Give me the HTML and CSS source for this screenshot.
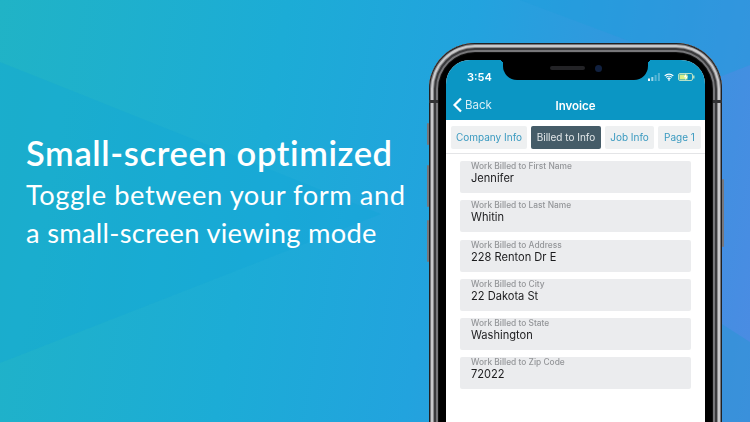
FILE: index.html
```html
<!DOCTYPE html>
<html lang="en">
<head>
<meta charset="utf-8">
<title>Small-screen optimized</title>
<link rel="stylesheet" href="styles.css">
</head>
<body>
<main class="stage">
  <svg class="facets" viewBox="0 0 750 422" aria-hidden="true">
    <polygon class="facet-wedge" points="0,62 381,214 0,363"/>
    <polygon class="facet-top" points="520,0 750,0 750,65 722,76"/>
    <polygon class="facet-bottom" points="700,310 750,342 750,422 640,422"/>
  </svg>
  <section class="copy">
    <h1>Small-screen optimized</h1>
    <p>Toggle between your form and<br><span class="tight">a small-screen viewing mode</span></p>
  </section>
  <div class="phone">
    <span class="btn btn-silent"></span>
    <span class="btn btn-up"></span>
    <span class="btn btn-down"></span>
    <span class="btn btn-power"></span>
    <span class="antenna antenna-left"></span>
    <span class="antenna antenna-right"></span>
    <div class="screen">
      <header class="appbar">
        <div class="status">
          <span class="time">3:54</span>
          <div class="notch"><span class="speaker"></span><span class="camera"></span></div>
          <div class="indicators">
            <svg width="12" height="8" viewBox="0 0 12 8"><rect x="0" y="5.500" width="2" height="2.500" fill="#fff"/><rect x="3.300" y="4" width="2" height="4" fill="#fff" opacity=".6"/><rect x="6.600" y="2" width="2" height="6" fill="#fff" opacity=".3"/><rect x="9.900" y="0" width="2" height="8" fill="#fff" opacity=".3"/></svg>
            <svg width="10" height="8" viewBox="0 0 12 9"><path d="M.8 3.200a7.600 7.600 0 0 1 10.400 0M2.500 5a5 5 0 0 1 7 0M4.200 6.800a2.600 2.600 0 0 1 3.600 0" fill="none" stroke="#fff" stroke-width="1.400"/><circle cx="6" cy="8" r="1" fill="#fff"/></svg>
            <svg width="17" height="8" viewBox="0 0 17 8"><rect x=".5" y=".5" width="14" height="7" rx="1.500" fill="none" stroke="#dff2c8" stroke-width=".8"/><rect x="1.500" y="1.500" width="8" height="5" fill="#d9f08a"/><path d="M8 .8 5.800 4.300h2L7 7.200l3-3.700H8z" fill="#fff"/><rect x="15.200" y="2.500" width="1.200" height="3" fill="#dff2c8"/></svg>
          </div>
        </div>
        <nav class="navrow">
          <a class="back"><svg width="11" height="16" viewBox="0 0 11 16"><path d="M9 1.500 2.500 8 9 14.500" fill="none" stroke="#fff" stroke-width="2.200"/></svg>Back</a>
          <strong class="title">Invoice</strong>
        </nav>
      </header>
      <div class="tabs">
        <span class="tab tab-company">Company Info</span>
        <span class="tab tab-active tab-billed">Billed to Info</span>
        <span class="tab tab-job">Job Info</span>
        <span class="tab tab-page">Page 1</span>
      </div>
      <form class="fields">
        <div class="field"><label>Work Billed to First Name</label><span>Jennifer</span></div>
        <div class="field"><label>Work Billed to Last Name</label><span>Whitin</span></div>
        <div class="field"><label>Work Billed to Address</label><span>228 Renton Dr E</span></div>
        <div class="field"><label>Work Billed to City</label><span>22 Dakota St</span></div>
        <div class="field"><label>Work Billed to State</label><span>Washington</span></div>
        <div class="field"><label>Work Billed to Zip Code</label><span>72022</span></div>
      </form>
    </div>
  </div>
</main>
</body>
</html>
```

FILE: styles.css
```css
* { box-sizing: border-box; margin: 0; padding: 0; }
html, body { width: 750px; height: 422px; overflow: hidden; }
body { font-family: Inter, "Liberation Sans", sans-serif; }

.stage {
  position: relative;
  width: 750px;
  height: 422px;
  overflow: hidden;
  display: flex;
  align-items: flex-start;
  justify-content: space-between;
  padding: 43px 28px 0 26px;
  background: linear-gradient(100deg, #20b3c6 0%, #1cacd6 35%, #22a3de 58%, #3595de 80%, #4c8be3 100%);
}
.facets { position: absolute; inset: 0; width: 750px; height: 422px; }
.facet-wedge { fill: #10a4d6; opacity: .32; }
.facet-top { fill: #1f9ddc; opacity: .45; }
.facet-bottom { fill: #2f95d6; opacity: .6; }

.copy { position: relative; padding-top: 89px; color: #fff; font-family: Lato, sans-serif; }
.copy h1 { font-size: 34.500px; line-height: 42px; font-weight: 600; letter-spacing: .63px; white-space: nowrap; }
.copy p { font-size: 27.300px; line-height: 38px; font-weight: 400; letter-spacing: .55px; margin-top: 2px; white-space: nowrap; }
.copy .tight { letter-spacing: .29px; }

.phone {
  position: relative;
  width: 293px;
  height: 420px;
  flex: none;
  padding: 17px 17px 0;
  border-radius: 46px 46px 0 0;
  background: #000;
  box-shadow:
    inset 0 0 0 1px #202022,
    inset 0 0 0 2px #77777a,
    inset 0 0 0 4px #c9c9cb,
    inset 0 0 0 5px #8a8a8c,
    inset 0 0 0 7px #3a3a3c,
    inset 0 0 0 9px #77777a,
    inset 0 0 0 10px #111;
  filter: blur(.3px);
}
.btn { position: absolute; width: 2px; background: #77777b; border-radius: 1px; }
.btn-silent { left: -2px; top: 80px; height: 22px; }
.btn-up { left: -2px; top: 122px; height: 42px; }
.btn-down { left: -2px; top: 177px; height: 42px; }
.btn-power { right: -2px; top: 136px; height: 68px; }
.antenna { position: absolute; top: 57px; width: 9px; height: 3px; background: #333335; }
.antenna-left { left: 0; }
.antenna-right { right: 0; }

.screen { position: relative; height: 100%; background: #fff; border-radius: 24px 24px 0 0; overflow: hidden; }

.appbar { background: #0b96c4; height: 60px; color: #fff; }
.status { position: relative; height: 30px; display: flex; justify-content: space-between; align-items: flex-start; }
.time { font-size: 11px; font-weight: 600; padding: 10px 0 0 21px; }
.notch {
  position: absolute;
  top: 0;
  left: 57px;
  width: 145px;
  height: 20px;
  background: #000;
  border-radius: 0 0 14px 14px;
  display: flex;
  justify-content: center;
  align-items: center;
  gap: 10px;
  padding-bottom: 4px;
}
.notch::before, .notch::after {
  content: "";
  position: absolute;
  top: 0;
  width: 4px;
  height: 4px;
}
.notch::before { left: -4px; background: radial-gradient(circle at 0 100%, transparent 4px, #000 4px); }
.notch::after { right: -4px; background: radial-gradient(circle at 100% 100%, transparent 4px, #000 4px); }
.speaker { width: 35px; height: 4px; border-radius: 2px; background: #232326; }
.camera { width: 7px; height: 7px; border-radius: 50%; background: #10203f; }
.indicators { display: flex; align-items: center; gap: 4px; padding: 13px 10px 0 0; }

.navrow { position: relative; height: 30px; display: flex; align-items: center; justify-content: center; padding-top: 1px; }
.back { position: absolute; left: 6px; top: 7px; display: flex; align-items: center; gap: 2px; font-size: 11.500px; color: #d8eef6; }
.title { font-size: 11.500px; font-weight: 600; }

.tabs {
  display: flex;
  gap: 4px;
  padding: 6px 4px 4px 5px;
  border-bottom: 1px solid #e4e5e7;
  height: 34px;
}
.tab {
  height: 23px;
  padding-bottom: 1px;
  border-radius: 2px;
  background: #eef0f1;
  color: #3a9ac0;
  font-size: 10px;
  display: flex;
  align-items: center;
  justify-content: center;
  white-space: nowrap;
}
.tab-company { width: 76px; }
.tab-billed { width: 70px; }
.tab-job { width: 49px; }
.tab-page { width: 43px; }
.tab-active { background: #455c68; color: #e4e8ea; }

.fields { display: flex; flex-direction: column; gap: 7.300px; padding: 7px 14px 0; }
.field {
  height: 32px;
  background: #ebecee;
  border-radius: 2px;
  padding: 0 11px;
  display: flex;
  flex-direction: column;
}
.field label { font-size: 8.400px; line-height: 10px; color: #939598; font-weight: 500; }
.field span { font-size: 11.100px; line-height: 13px; padding-top: 1px; color: #1c1c1e; }
```
